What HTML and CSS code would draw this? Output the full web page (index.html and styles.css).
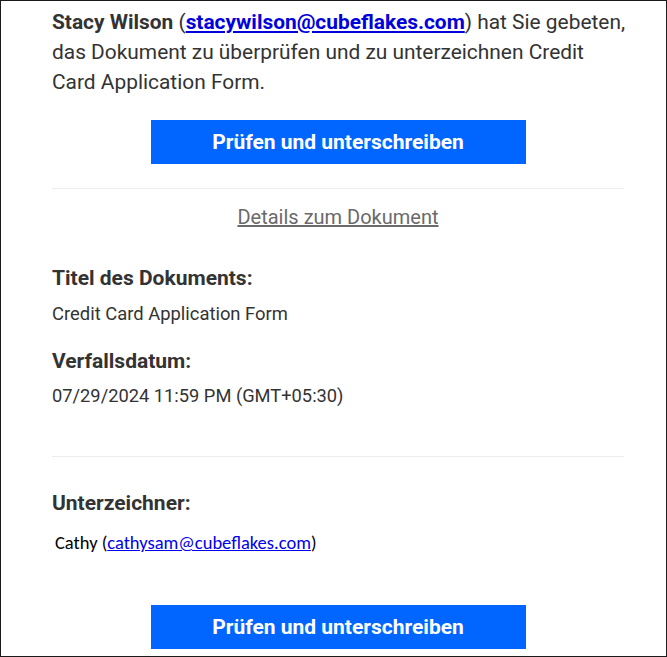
FILE: index.html
```html
<!DOCTYPE html>
<html lang="de">
<head>
<meta charset="utf-8">
<link rel="stylesheet" href="styles.css">
</head>
<body>
<div class="frame">
  <div class="content">
    <p class="intro"><b>Stacy Wilson</b> (<a class="strong-link" href="#">stacywilson@cubeflakes.com</a>) hat Sie gebeten, das Dokument zu überprüfen und zu unterzeichnen Credit Card Application Form.</p>
    <div class="btn-row"><a class="btn" href="#">Prüfen und unterschreiben</a></div>
    <hr class="sep">
    <div class="details"><a href="#">Details zum Dokument</a></div>
    <h3 class="label">Titel des Dokuments:</h3>
    <p class="value">Credit Card Application Form</p>
    <h3 class="label label-2">Verfallsdatum:</h3>
    <p class="value value-2">07/29/2024 11:59 PM (GMT+05:30)</p>
    <hr class="sep sep-2">
    <h3 class="label label-3">Unterzeichner:</h3>
    <p class="signer">Cathy (<a href="#">cathysam@cubeflakes.com</a>)</p>
    <div class="btn-row btn-row-2"><a class="btn" href="#">Prüfen und unterschreiben</a></div>
  </div>
</div>
</body>
</html>
```
FILE: styles.css
```css
html, body { margin: 0; padding: 0; background: #fff; }
.frame {
  box-sizing: border-box;
  width: 667px;
  height: 657px;
  border: 1px solid #1a1a1a;
  overflow: hidden;
  font-family: Roboto, "Liberation Sans", sans-serif;
  color: #333;
}
.content {
  width: 572px;
  margin-left: 51px;
}
.intro {
  margin: 6px -8px 0 0;
  font-size: 20.9px;
  line-height: 30px;
  color: #333;
}
.intro b { font-weight: 700; }
.strong-link { color: #0000dd; font-weight: 700; text-decoration: underline; }
.btn-row { display: flex; justify-content: center; margin-top: 23px; }
.btn {
  display: flex; align-items: center; justify-content: center;
  width: 375px; height: 44px;
  background: #0066ff;
  color: #fff;
  font-weight: 700;
  font-size: 21px;
  text-decoration: none;
}
.sep { border: 0; border-top: 1px solid #ececec; margin: 24px 0 0; height: 0; }
.details { text-align: center; margin-top: 16px; font-size: 20px; line-height: 24px; }
.details a { color: #6a6a6a; text-decoration: underline; }
.label { margin: 37px 0 0; font-size: 21px; font-weight: 700; line-height: 24px; color: #333; }
.label-2 { margin-top: 23px; }
.label-3 { margin-top: 34px; }
.value { margin: 12px 0 0; font-size: 18.4px; line-height: 24px; color: #333; }
.value-2 { margin-top: 11px; font-size: 18.3px; }
.sep-2 { margin-top: 48px; }
.signer { margin: 17px 0 0 3px; font-family: Carlito, "Open Sans", sans-serif; font-size: 18.5px; line-height: 22px; color: #000; }
.signer a { color: #0000ee; }
.btn-row-2 { margin-top: 51px; }
```
